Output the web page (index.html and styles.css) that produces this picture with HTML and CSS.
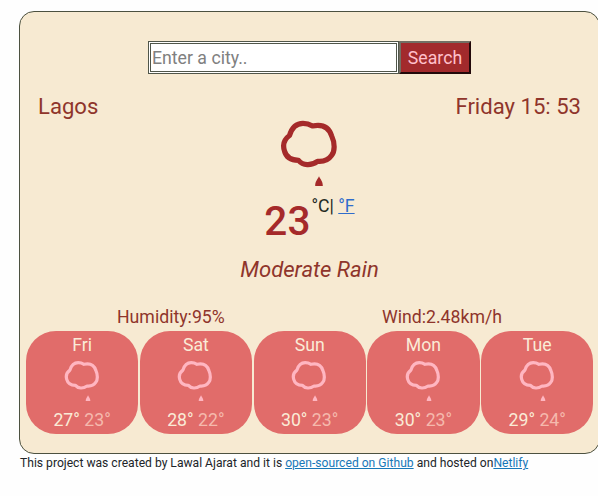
FILE: index.html
```html
<!DOCTYPE html>
<html lang="en">
<head>
<meta charset="utf-8">
<title>Weather</title>
<link rel="stylesheet" href="styles.css">
</head>
<body>
<svg class="defs" width="0" height="0">
  <symbol id="rain" viewBox="0 0 60 70">
    <path d="M9.500 16.500C12 8 16 4.300 23 4.300C27 4.300 30 5.500 32.500 7C43 4.800 49 8.500 51.700 17C55 24 55 32.500 51.500 36.500C48 41.500 43 42.800 37.500 42.300C31 47 23 46.700 18.500 41.300C10 41 6 38 4.500 32C2.500 26 4 20.500 9.500 16.500Z" fill="none" stroke="currentColor" stroke-width="5.200" stroke-linejoin="round"/>
    <path d="M39 57.200C40.500 60.500 43 62.500 42.800 66.900H35.200C35 62.500 37.500 60.500 39 57.200Z" fill="currentColor"/>
  </symbol>
</svg>
<main class="card">
  <form class="search">
    <input class="city-input" type="text" placeholder="Enter a city..">
    <button class="search-button" type="button">Search</button>
  </form>
  <div class="heading"><span>Lagos</span><span>Friday 15: 53</span></div>
  <svg class="main-icon"><use href="#rain"/></svg>
  <div class="temperature"><strong>23</strong><span class="units">°C| <a href="#">°F</a></span></div>
  <div class="description">Moderate Rain</div>
  <div class="details"><span>Humidity:95%</span><span>Wind:2.48km/h</span></div>
  <div class="forecast">
    <div class="day"><span class="name">Fri</span><svg><use href="#rain"/></svg><div class="range">27° <span>23°</span></div></div>
    <div class="day"><span class="name">Sat</span><svg><use href="#rain"/></svg><div class="range">28° <span>22°</span></div></div>
    <div class="day"><span class="name">Sun</span><svg><use href="#rain"/></svg><div class="range">30° <span>23°</span></div></div>
    <div class="day"><span class="name">Mon</span><svg><use href="#rain"/></svg><div class="range">30° <span>23°</span></div></div>
    <div class="day"><span class="name">Tue</span><svg><use href="#rain"/></svg><div class="range">29° <span>24°</span></div></div>
  </div>
</main>
<footer class="credit">This project was created by Lawal Ajarat and it is <a href="#">open-sourced on Github</a> and hosted on<a href="#">Netlify</a></footer>
</body>
</html>
```
FILE: styles.css
```css
* { box-sizing: border-box; }
body {
  margin: 0;
  padding: 11px 0 0 19px;
  background: #fefefe;
  font-family: Roboto, sans-serif;
  color: #212529;
  overflow: hidden;
}
.defs { display: block; }
.card {
  display: flex;
  flex-direction: column;
  width: 581px;
  height: 443px;
  padding-top: 29px;
  background: #f7ead2;
  border: 1px solid #4c5140;
  border-radius: 15px;
  color: #8f352b;
}
.search { display: flex; justify-content: center; height: 33px; }
.city-input {
  width: 251px;
  padding: 0 1px;
  border: 3px double #50564a;
  border-radius: 0;
  background: #fff;
  font: 17.700px Roboto, sans-serif;
}
.city-input::placeholder { color: #808080; }
.search-button {
  width: 72px;
  padding: 0;
  border: 2px solid;
  border-color: #727064 #22090a #22090a #727064;
  border-radius: 0;
  background: #a22a2c;
  color: #ffc0cb;
  font: 17.700px Roboto, sans-serif;
}
.heading {
  display: flex;
  justify-content: space-between;
  margin-top: 18px;
  padding: 0 18px;
  font-size: 22.100px;
  line-height: 28px;
}
.main-icon {
  flex: none;
  width: 60px;
  height: 70px;
  margin: -1px 0 0 260px;
  color: #a52a2a;
}
.temperature {
  display: flex;
  justify-content: center;
  height: 60px;
  color: #a52a2a;
}
.temperature strong { font-size: 40.500px; font-weight: 500; line-height: 64px; }
.units { padding-left: 1px; color: #24291f; font-size: 17.700px; line-height: 34px; }
.units a { color: #2f6dcc; }
.description {
  margin-top: 6px;
  text-align: center;
  font-size: 22.100px;
  font-style: italic;
  line-height: 28px;
}
.details {
  display: grid;
  grid-template-columns: 97px 265px 1fr;
  margin-top: 22px;
  font-size: 17.700px;
  line-height: 24px;
}
.details span:first-child { grid-column: 2; }
.forecast {
  display: grid;
  grid-template-columns: repeat(5, 112.200px);
  gap: 1.600px;
  margin: 2px 0 0 6px;
}
.day {
  display: flex;
  flex-direction: column;
  align-items: center;
  height: 103px;
  border-radius: 30px;
  background: #e16c6a;
  color: #faebd7;
  font-size: 17.700px;
}
.name { line-height: 28px; }
.day svg { width: 37px; height: 43px; margin-top: 1px; color: #ffb6c1; }
.range { margin-top: 3px; line-height: 28px; }
.range span { color: #f5b9ad; }
.credit { padding-left: 1px; font-size: 12.120px; line-height: 18px; }
.credit a { color: #1878b8; }
```
